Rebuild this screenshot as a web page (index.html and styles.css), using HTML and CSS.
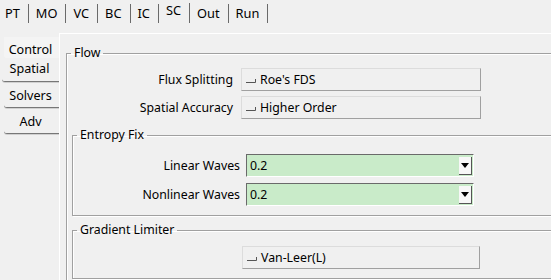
FILE: index.html
```html
<!DOCTYPE html>
<html lang="en">
<head>
    <meta charset="UTF-8">
    <title>SC Settings</title>
    <link rel="stylesheet" href="styles.css">
</head>
<body>
    <!-- Top notebook tabs -->
    <div class="tabbar">
        <div class="tab">PT</div>
        <div class="tab">MO</div>
        <div class="tab">VC</div>
        <div class="tab">BC</div>
        <div class="tab">IC</div>
        <div class="tab active">SC</div>
        <div class="tab">Out</div>
        <div class="tab">Run</div>
    </div>

    <div class="main">
        <!-- Side tabs -->
        <div class="side">
            <div class="side-tab first">Control</div>
            <div class="side-tab active">Spatial</div>
            <div class="side-tab">Solvers</div>
            <div class="side-tab">Adv</div>
        </div>

        <div class="panel">
            <fieldset class="group flow">
                <legend>Flow</legend>

                <div class="row flow-row">
                    <span class="label">Flux Splitting</span>
                    <div class="menubutton"><span class="ind"><svg width="10" height="5" viewBox="0 0 10 5"><path d="M0 4.5H9.5V1" fill="none" stroke="#555" stroke-width="1"/></svg></span>Roe's FDS</div>
                </div>
                <div class="row flow-row">
                    <span class="label">Spatial Accuracy</span>
                    <div class="menubutton"><span class="ind"><svg width="10" height="5" viewBox="0 0 10 5"><path d="M0 4.5H9.5V1" fill="none" stroke="#555" stroke-width="1"/></svg></span>Higher Order</div>
                </div>

                <fieldset class="group inner entropy">
                    <legend>Entropy Fix</legend>
                    <div class="row combo-row">
                        <span class="label">Linear Waves</span>
                        <div class="combo"><span class="value">0.2</span><span class="arrow"><svg width="8" height="5" viewBox="0 0 8 5"><path d="M0 0H8L4 5Z" fill="#000"/></svg></span></div>
                    </div>
                    <div class="row combo-row">
                        <span class="label">Nonlinear Waves</span>
                        <div class="combo"><span class="value">0.2</span><span class="arrow"><svg width="8" height="5" viewBox="0 0 8 5"><path d="M0 0H8L4 5Z" fill="#000"/></svg></span></div>
                    </div>
                </fieldset>

                <fieldset class="group inner limiter">
                    <legend>Gradient Limiter</legend>
                    <div class="row limiter-row">
                        <div class="menubutton wide"><span class="ind"><svg width="10" height="5" viewBox="0 0 10 5"><path d="M0 4.5H9.5V1" fill="none" stroke="#555" stroke-width="1"/></svg></span>Van-Leer(L)</div>
                    </div>
                </fieldset>
            </fieldset>
        </div>
    </div>
</body>
</html>
```

FILE: styles.css
```css
body {
    margin: 0;
    width: 551px;
    height: 280px;
    overflow: hidden;
    background: #f0f0f0;
    font-family: "Noto Sans", "Open Sans", sans-serif;
    font-size: 12.3px;
    color: #000;
}

/* Top tabs */
.tabbar {
    display: flex;
    height: 33px;
    font-size: 12.8px;
}

.tab {
    height: 17px;
    margin-top: 4px;
    padding: 2px 8px 0 7px;
    border-right: 1px solid #6a6a6a;
    line-height: 15px;
}

.tab:first-child {
    padding-left: 5px;
}

.tab.active {
    height: 20px;
    margin-top: 3px;
    padding-top: 0;
}

/* Main area */
.main {
    display: flex;
    height: 247px;
}

.side {
    width: 59px;
    padding-top: 4px;
    box-sizing: border-box;
    font-size: 12.6px;
}

.side-tab {
    height: 25px;
    margin-left: 4px;
    border-bottom: 1px solid #777;
    border-radius: 0 0 0 3px;
    box-shadow: 0 1px 0 #d0d0d0;
    text-align: center;
    line-height: 24px;
    padding-right: 2px;
    box-sizing: border-box;
    padding-top: 2px;
    height: 26px;
}

.side-tab.first {
    height: 21px;
    border-bottom: none;
    box-shadow: none;
    background: #f4f4f4;
    line-height: 21px;
    padding-top: 2px;
}

.side-tab.active {
    height: 24px;
    margin-left: 2px;
    line-height: 20px;
    padding-top: 1px;
}

.panel {
    flex: 1;
    border-top: 1px solid #fff;
    border-left: 1px solid #fff;
    overflow: hidden;
}

/* Group boxes */
.group {
    margin: 0;
    padding: 0;
    border: 1px solid #a0a0a0;
    box-shadow: inset 1px 1px 0 #fff, 1px 1px 0 #fff;
}

.group legend {
    padding: 0 3px;
    margin-left: 4px;
    line-height: 16px;
}

.flow {
    width: 560px;
    margin: 11px 0 0 6px;
    padding-bottom: 20px;
}

.inner {
    width: 540px;
    margin-left: 5px;
}

.row {
    display: flex;
    align-items: center;
}

.label {
    text-align: right;
}

.flow-row {
    margin-top: 5px;
}

.flow-row:first-of-type {
    margin-top: 7px;
}

.flow-row .label {
    width: 166px;
    margin-right: 8px;
}

.menubutton {
    width: 238px;
    height: 21px;
    display: flex;
    align-items: center;
    border: 1px solid #dcdcdc;
    border-right-color: #a0a0a0;
    border-bottom-color: #a0a0a0;
    line-height: 16px;
}

.ind {
    width: 18px;
    display: flex;
    justify-content: center;
    padding-top: 1px;
}

.entropy {
    margin-top: 8px;
    padding-bottom: 9px;
}

.combo-row {
    margin-top: 6px;
}

.combo-row:first-of-type {
    margin-top: 11px;
}

.combo-row .label {
    width: 167px;
    margin-right: 6px;
}

.combo {
    width: 226px;
    height: 21px;
    display: flex;
    align-items: center;
    background: #c9ebc9;
    border: 1px solid #fff;
    border-top-color: #6a6a6a;
    border-left-color: #6a6a6a;
}

.combo .value {
    flex: 1;
    padding-left: 3px;
}

.arrow {
    width: 13px;
    height: 18px;
    margin-right: 1px;
    display: flex;
    align-items: center;
    justify-content: center;
    background: #f7f7f7;
    border-right: 1px solid #555;
    border-bottom: 1px solid #555;
    box-sizing: border-box;
}

.limiter {
    margin-top: 6px;
    padding-bottom: 9px;
}

.limiter-row {
    margin-top: 8px;
    padding-left: 169px;
}

.menubutton.wide {
    width: 236px;
}
```
